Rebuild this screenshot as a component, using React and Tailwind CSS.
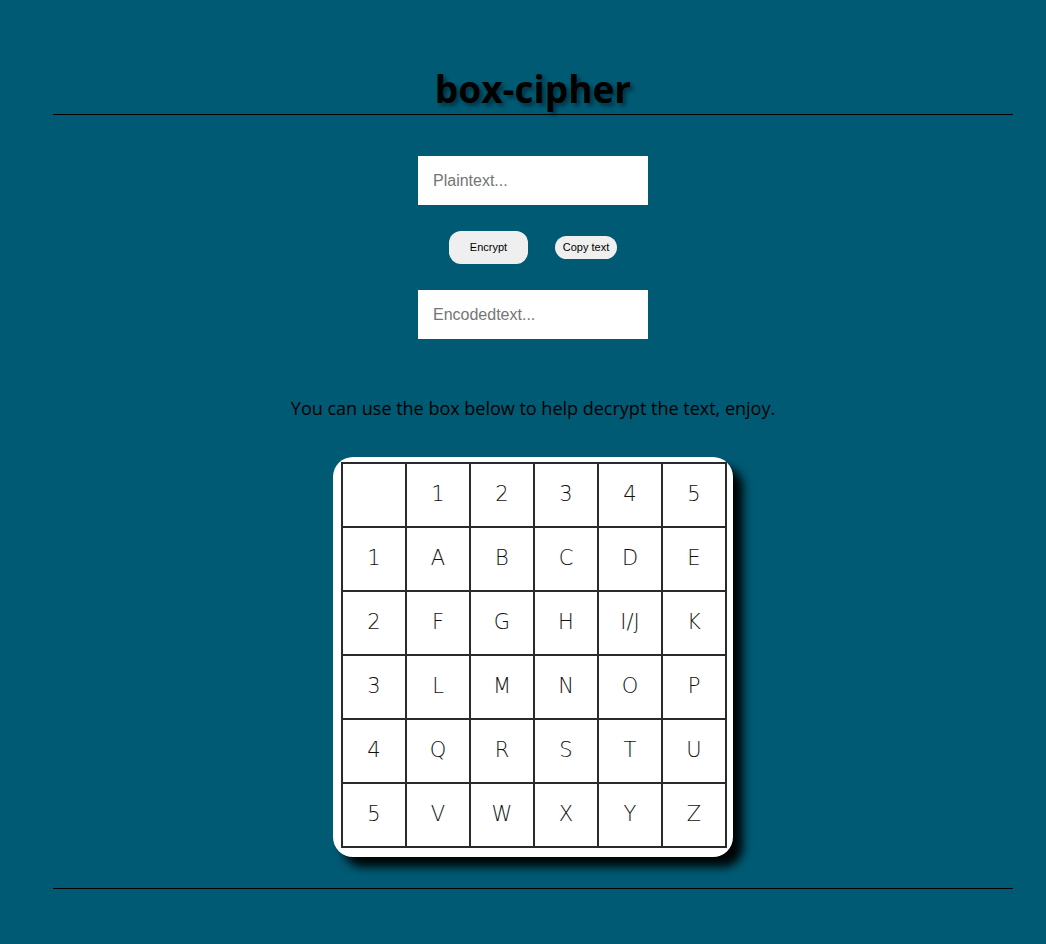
import React from "react";

const rows = [
  ["", "1", "2", "3", "4", "5"],
  ["1", "A", "B", "C", "D", "E"],
  ["2", "F", "G", "H", "I/J", "K"],
  ["3", "L", "M", "N", "O", "P"],
  ["4", "Q", "R", "S", "T", "U"],
  ["5", "V", "W", "X", "Y", "Z"],
];

export default function App() {
  return (
    <div className="min-h-[944px] w-full bg-[#005a74] font-['Open_Sans',sans-serif] text-black">
      <div className="ml-[53px] w-[960px] flex flex-col items-center">
        <h1 className="mt-[64px] text-[37px] leading-[50px] font-bold [text-shadow:3px_3px_4px_rgba(0,0,0,0.45)]">
          box-cipher
        </h1>
        <div className="w-full h-px bg-black" />
        <input
          className="mt-[41px] w-[230px] h-[49px] bg-white px-[15px] text-[16px] font-['Liberation_Sans',sans-serif] placeholder:text-[#757575] outline-none"
          placeholder="Plaintext..."
        />
        <div className="mt-[26px] flex items-center gap-[27px] h-[33px] font-['Liberation_Sans',sans-serif]">
          <button className="w-[79px] h-[33px] rounded-[12px] bg-[#efefef] text-[11px] text-black">
            Encrypt
          </button>
          <button className="w-[62px] h-[23px] rounded-full bg-[#efefef] text-[11px] text-black">
            Copy text
          </button>
        </div>
        <input
          className="mt-[26px] w-[230px] h-[49px] bg-white px-[15px] text-[16px] font-['Liberation_Sans',sans-serif] placeholder:text-[#757575] outline-none"
          placeholder="Encodedtext..."
        />
        <p className="mt-[57px] text-[18px] leading-[24px]">
          You can use the box below to help decrypt the text, enjoy.
        </p>
        <div className="mt-[37px] w-[400px] h-[400px] bg-white rounded-[20px] shadow-[10px_10px_10px_rgba(0,0,0,0.95)] pl-[8px] pt-[5px]">
          <div className="grid grid-cols-[repeat(6,62px)] gap-[2px] p-[2px] bg-[#2a2a2a] w-[386px]">
            {rows.flat().map((c, i) => (
              <div
                key={i}
                className="h-[62px] bg-white flex items-center justify-center text-[21px] font-['DejaVu_Sans',sans-serif] font-light text-[#111]"
              >
                {c}
              </div>
            ))}
          </div>
        </div>
        <div className="mt-[31px] w-full h-px bg-black" />
      </div>
    </div>
  );
}
